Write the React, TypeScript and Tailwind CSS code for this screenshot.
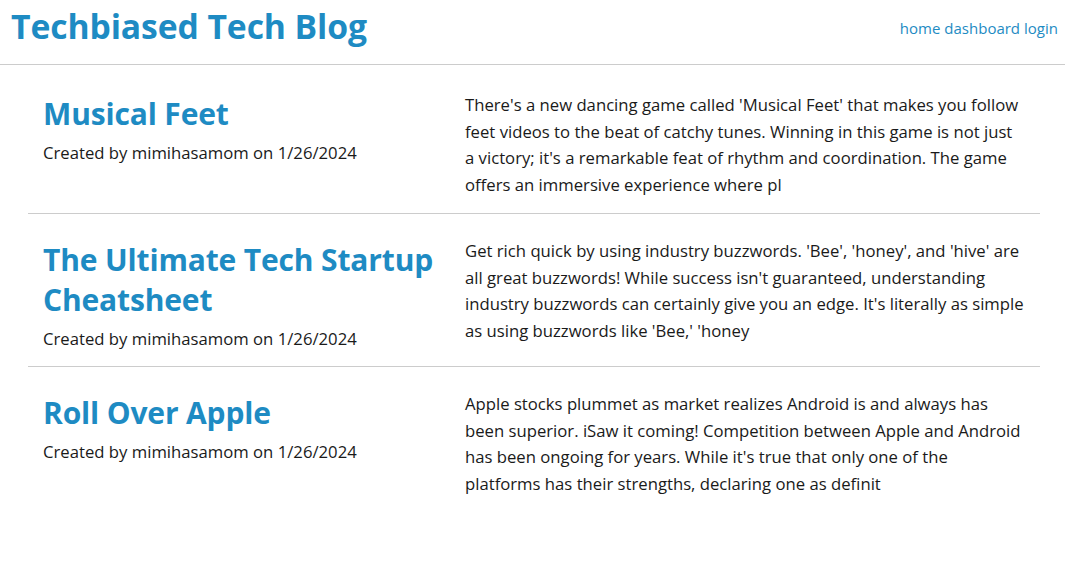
const posts = [
  {
    title: 'Musical Feet',
    author: 'mimihasamom',
    date: '1/26/2024',
    body: "There's a new dancing game called 'Musical Feet' that makes you follow feet videos to the beat of catchy tunes. Winning in this game is not just a victory; it's a remarkable feat of rhythm and coordination. The game offers an immersive experience where pl",
  },
  {
    title: 'The Ultimate Tech Startup Cheatsheet',
    author: 'mimihasamom',
    date: '1/26/2024',
    body: "Get rich quick by using industry buzzwords. 'Bee', 'honey', and 'hive' are all great buzzwords! While success isn't guaranteed, understanding industry buzzwords can certainly give you an edge. It's literally as simple as using buzzwords like 'Bee,' 'honey",
  },
  {
    title: 'Roll Over Apple',
    author: 'mimihasamom',
    date: '1/26/2024',
    body: "Apple stocks plummet as market realizes Android is and always has been superior. iSaw it coming! Competition between Apple and Android has been ongoing for years. While it's true that only one of the platforms has their strengths, declaring one as definit",
  },
]

export default function App() {
  return (
    <div className="min-h-[563px] bg-white text-[#1a1a1a] font-['Open_Sans',sans-serif]">
      <header className="flex items-center justify-between h-[65px] pl-[11px] pr-[7px] border-b border-[#cccccc]">
        <h1 className="text-[33.7px] font-bold text-[#1e8bc3] leading-none -mt-[10px] tracking-[-0.1px]">
          Techbiased Tech Blog
        </h1>
        <nav className="flex gap-[4px] text-[15px] text-[#1e8bc3] -mt-[8px]">
          <a href="#">home</a>
          <a href="#">dashboard</a>
          <a href="#">login</a>
        </nav>
      </header>
      <main className="mx-[28px] w-[1012px] pt-[3px]">
        {posts.map((post, i) => (
          <article
            key={i}
            className="grid grid-cols-[422px_590px] border-b border-[#cccccc] last:border-0 pt-[24px] pb-[14px]"
          >
            <div className="px-[15px]">
              <h2 className="mt-[2px] text-[30px] font-bold text-[#1e8bc3] leading-[40px] tracking-[-0.15px]">
                {post.title}
              </h2>
              <p className="mt-[5px] text-[16.7px] leading-[27px]">
                Created by {post.author} on {post.date}
              </p>
            </div>
            <p className="px-[15px] text-[16.7px] leading-[26.7px]">{post.body}</p>
          </article>
        ))}
      </main>
    </div>
  )
}
